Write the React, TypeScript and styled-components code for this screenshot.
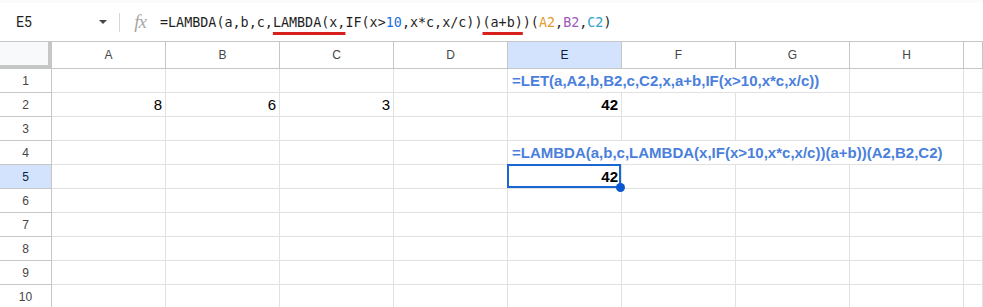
import styled, { createGlobalStyle } from 'styled-components';

const GlobalStyle = createGlobalStyle`
  body {
    margin: 0;
    background: #ffffff;
    font-family: "Liberation Sans", Arial, sans-serif;
  }
`;

const COLUMNS = ['A', 'B', 'C', 'D', 'E', 'F', 'G', 'H', ''];
const ACTIVE_COL = 4;
const ACTIVE_ROW = 5;

interface CellData {
  text: string;
  span?: number;
  align?: 'left' | 'right';
  bold?: boolean;
  blue?: boolean;
  selected?: boolean;
}

const LET_FORMULA = '=LET(a,A2,b,B2,c,C2,x,a+b,IF(x>10,x*c,x/c))';
const LAMBDA_FORMULA = '=LAMBDA(a,b,c,LAMBDA(x,IF(x>10,x*c,x/c))(a+b))(A2,B2,C2)';

const SHEET: Record<number, Record<number, CellData>> = {
  1: { 4: { text: LET_FORMULA, span: 3, bold: true, blue: true } },
  2: {
    0: { text: '8', align: 'right' },
    1: { text: '6', align: 'right' },
    2: { text: '3', align: 'right' },
    4: { text: '42', align: 'right', bold: true },
  },
  4: { 4: { text: LAMBDA_FORMULA, span: 4, bold: true, blue: true } },
  5: { 4: { text: '42', align: 'right', bold: true, selected: true } },
};

const App = () => {
  const rows = Array.from({ length: 10 }, (_, i) => i + 1);

  const renderRow = (row: number) => {
    const data = SHEET[row] || {};
    const cells = [];
    let col = 0;
    while (col < COLUMNS.length) {
      const cell = data[col];
      const span = cell?.span ?? 1;
      cells.push(
        <Cell
          key={`${row}-${col}`}
          $span={span}
          $align={cell?.align ?? 'left'}
          $bold={!!cell?.bold}
          $blue={!!cell?.blue}
        >
          {cell?.text}
          {cell?.selected && (
            <Selection>
              <FillHandle />
            </Selection>
          )}
        </Cell>
      );
      col += span;
    }
    return cells;
  };

  return (
    <Page>
      <GlobalStyle />
      <TopStrip />
      <FormulaBar>
        <NameBox>
          <span>E5</span>
          <Caret />
        </NameBox>
        <Divider />
        <FxLabel>fx</FxLabel>
        <FormulaText>
          =LAMBDA(a,b,c,<Marked>LAMBDA(x,</Marked>IF(x&gt;<Ref $color="#1a6ee0">10</Ref>,x*c,x/c))
          <Marked>(a+b)</Marked>)(<Ref $color="#e69b2c">A2</Ref>,<Ref $color="#9c5cb8">B2</Ref>,
          <Ref $color="#2ea3c7">C2</Ref>)
        </FormulaText>
      </FormulaBar>
      <Grid>
        <Corner />
        {COLUMNS.map((name, i) => (
          <ColumnHeader key={name || 'I'} $active={i === ACTIVE_COL}>
            {name}
          </ColumnHeader>
        ))}
        {rows.map((row) => [
          <RowHeader key={`h${row}`} $active={row === ACTIVE_ROW}>
            {row}
          </RowHeader>,
          ...renderRow(row),
        ])}
      </Grid>
    </Page>
  );
};

const Page = styled.div`
  width: 983px;
  height: 307px;
  overflow: hidden;
  background: #ffffff;
`;

const TopStrip = styled.div`
  height: 3px;
  background: #f9fbfd;
`;

const FormulaBar = styled.div`
  display: flex;
  align-items: center;
  height: 38px;
  border-bottom: 1px solid #c7c7c7;
`;

const NameBox = styled.div`
  display: flex;
  align-items: center;
  justify-content: space-between;
  width: 119px;
  box-sizing: border-box;
  padding: 0 12px 0 16px;

  font-family: Roboto, "Liberation Sans", sans-serif;
  font-size: 14px;
  color: #1f1f1f;
`;

const Caret = styled.div`
  width: 0;
  height: 0;
  border-left: 4px solid transparent;
  border-right: 4px solid transparent;
  border-top: 4px solid #444746;
`;

const Divider = styled.div`
  width: 1px;
  height: 19px;
  background: #d5d7da;
`;

const FxLabel = styled.div`
  width: 40px;
  text-align: center;

  font-family: "Liberation Serif", serif;
  font-style: italic;
  font-size: 19px;
  color: #a7a7a7;
  letter-spacing: -1px;
`;

const FormulaText = styled.div`
  white-space: pre;
  font-family: "DejaVu Sans Mono", "Liberation Mono", monospace;
  font-size: 13.4px;
  color: #1f1f1f;
`;

const Marked = styled.span`
  text-decoration: underline;
  text-decoration-color: #d8201e;
  text-decoration-thickness: 2.5px;
  text-underline-offset: 5px;
`;

const Ref = styled.span<{ $color: string }>`
  color: ${(p) => p.$color};
`;

const Grid = styled.div`
  display: grid;
  grid-template-columns: 52px repeat(8, 114px) 1fr;
  grid-template-rows: 27px;
  grid-auto-rows: 24px;
`;

const Corner = styled.div`
  box-sizing: border-box;
  background: #f8f9fa;
  border-right: 4px solid #c4c7c5;
  border-bottom: 4px solid #c4c7c5;
`;

const ColumnHeader = styled.div<{ $active: boolean }>`
  display: flex;
  align-items: center;
  justify-content: center;
  box-sizing: border-box;
  border-right: 1px solid #c4c7c5;
  border-bottom: 1px solid #c4c7c5;
  background: ${(p) => (p.$active ? '#d3e3fd' : '#ffffff')};

  font-size: 12px;
  color: ${(p) => (p.$active ? '#0b1f44' : '#444746')};
`;

const RowHeader = styled(ColumnHeader)``;

const Cell = styled.div<{ $span: number; $align: 'left' | 'right'; $bold: boolean; $blue: boolean }>`
  position: relative;
  grid-column: span ${(p) => p.$span};
  display: flex;
  align-items: center;
  justify-content: ${(p) => (p.$align === 'right' ? 'flex-end' : 'flex-start')};
  box-sizing: border-box;
  padding: 0 3px 0 4px;
  border-right: 1px solid #e1e1e1;
  border-bottom: 1px solid #e1e1e1;
  white-space: nowrap;

  font-size: 15px;
  font-weight: ${(p) => (p.$bold ? 700 : 400)};
  color: ${(p) => (p.$blue ? '#4a80dc' : '#000000')};
`;

const Selection = styled.div`
  position: absolute;
  top: -1px;
  left: -1px;
  right: 0;
  bottom: 0;
  z-index: 2;
  border: 2px solid #1a67d2;
  pointer-events: none;
`;

const FillHandle = styled.div`
  position: absolute;
  right: -6px;
  bottom: -6px;
  width: 9px;
  height: 9px;
  border-radius: 50%;
  background: #0b57d0;
`;

export default App;
